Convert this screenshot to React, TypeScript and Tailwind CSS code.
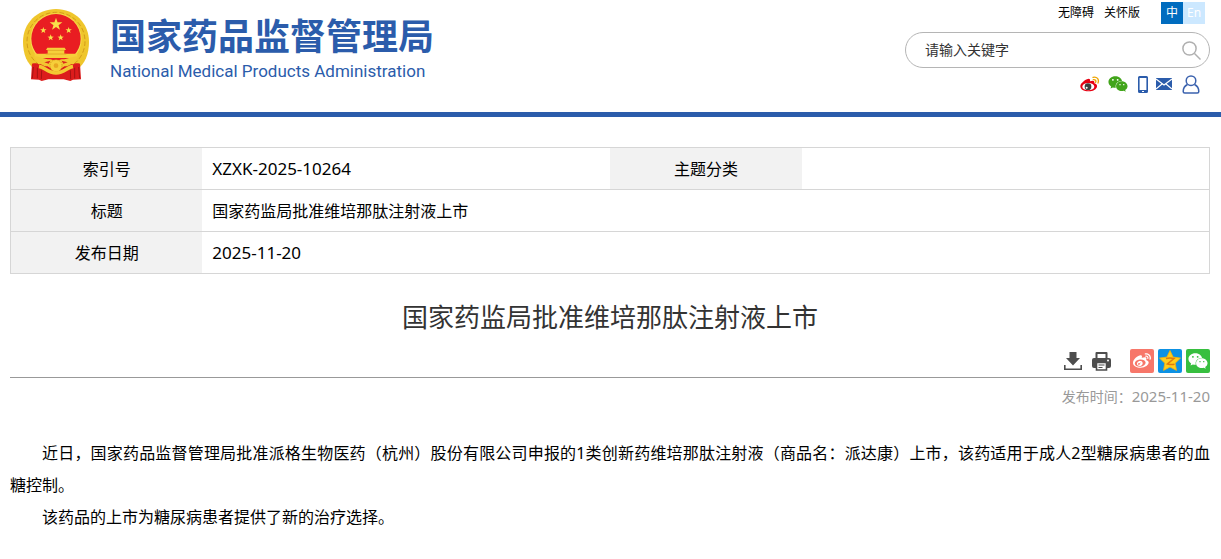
import { FaWeixin, FaWeibo } from "react-icons/fa";

const font = "font-['Noto_Sans','Noto_Sans_CJK_SC',sans-serif]";

function starPoints(cx: number, cy: number, r: number, inner = 0.4) {
  return Array.from({ length: 10 }, (_, i) => {
    const a = (Math.PI / 5) * i - Math.PI / 2;
    const d = i % 2 === 0 ? r : r * inner;
    return `${(cx + d * Math.cos(a)).toFixed(1)},${(cy + d * Math.sin(a)).toFixed(1)}`;
  }).join(" ");
}

function Emblem() {
  return (
    <svg viewBox="0 0 198 216" className="h-[72px] w-[66px] shrink-0" aria-hidden="true">
      <path d="M99 0c56 0 99 42 99 98 0 37-12 66-36 84l-63 14-63-14C12 164 0 135 0 98 0 42 43 0 99 0z" fill="#efc62c" />
      <circle cx="99" cy="97" r="87" fill="none" stroke="#d39a1a" strokeWidth="3" strokeDasharray="14 7" />
      <circle cx="99" cy="90" r="77" fill="#f7dc4c" />
      <circle cx="99" cy="89" r="74" fill="#e91d22" />
      <polygon points={starPoints(99, 46, 20)} fill="#f9e04b" />
      <polygon points={starPoints(61, 64, 10)} fill="#f9e04b" />
      <polygon points={starPoints(137, 64, 10)} fill="#f9e04b" />
      <polygon points={starPoints(83, 86, 10)} fill="#f9e04b" />
      <polygon points={starPoints(113, 86, 10)} fill="#f9e04b" />
      <path d="M73 116h52l4 7h-5v11h39v13H35v-13h39v-11h-5z" fill="#f6cf3a" />
      <path d="M74 124h50M68 135h62" stroke="#d9981f" strokeWidth="2" />
      <path d="M27 164c14-3 26 0 38 8h68c12-8 24-11 38-8l3 47-24 1-8 4-20-5H76l-20 5-8-4-24-1z" fill="#dc1c1c" />
      <path d="M31 174l-3 34M43 176l0 32M56 184l-1 26M167 174l3 34M155 176l0 32M142 184l1 26" stroke="#a51313" strokeWidth="3" />
      <path d="M34 142c22 2 34 10 48 9l17 5 17-5c14 1 26-7 48-9l-12 24c-14-2-22 0-34 10H80c-12-10-20-12-34-10z" fill="#f3c832" />
      <path d="M64 160l18-5-5 9zM134 160l-18-5 5 9z" fill="#d9281e" />
      <circle cx="99" cy="170" r="18" fill="#f6cf3a" stroke="#c98a14" strokeWidth="2" strokeDasharray="4 3" />
      <circle cx="99" cy="170" r="7" fill="#e8a822" />
      <path d="M48 172c18 3 26 20 51 20s33-17 51-20" fill="none" stroke="#f3c832" strokeWidth="11" />
    </svg>
  );
}

function WeiboColor() {
  return (
    <svg viewBox="0 0 60 48" className="h-4 w-5" aria-hidden="true">
      <path d="M21 10c7-4 11 0 9 6 8-3 15-2 13 6 6 2 9 5 8 10-2 8-12 14-25 14C11 46 1 40 1 31c0-7 10-17 20-21z" fill="#e60012" />
      <ellipse cx="25" cy="32" rx="18" ry="11" fill="#fff" />
      <circle cx="24" cy="32" r="10" fill="#3e3e3e" />
      <circle cx="20" cy="35" r="3" fill="#fff" />
      <path d="M39 4c12-3 19 6 15 17M40 11c6-1 9 3 7 8" fill="none" stroke="#efa500" strokeWidth="4" strokeLinecap="round" />
    </svg>
  );
}

function PhoneIcon() {
  return (
    <svg viewBox="0 0 10 17" className="h-[17px] w-[10px]" aria-hidden="true">
      <path fillRule="evenodd" d="M1.500 0h7A1.500 1.500 0 0 1 10 1.500v14A1.500 1.500 0 0 1 8.500 17h-7A1.500 1.500 0 0 1 0 15.500v-14A1.500 1.500 0 0 1 1.500 0zM1.600 2v12h6.800V2zM4 15v1h2v-1z" fill="#2b5cab" />
    </svg>
  );
}

function MailIcon() {
  return (
    <svg viewBox="0 0 16 12" className="h-3 w-4" aria-hidden="true">
      <path d="M0 0h16v12H0z" fill="#2b5cab" />
      <path d="M0 1l8 6 8-6M0 11l6-5M16 11l-6-5" fill="none" stroke="#fff" strokeWidth="1.2" />
    </svg>
  );
}

function UserIcon() {
  return (
    <svg viewBox="0 0 18 19" className="h-[19px] w-[18px]" fill="none" stroke="#3b62ae" strokeWidth="1.5" aria-hidden="true">
      <circle cx="9" cy="5.700" r="4.800" />
      <path d="M5.500 9.500C2.500 11 1.200 13.500 1.200 16.500c0 1 .5 1.500 1.500 1.500h12.600c1 0 1.500-.5 1.500-1.500 0-3-1.300-5.500-4.300-7" />
    </svg>
  );
}

function DownloadIcon() {
  return (
    <svg viewBox="0 0 18 18" className="h-[18px] w-[18px]" aria-hidden="true">
      <path d="M5.500 0h7v6H16l-7 7.500L2 6h3.500z" fill="#4d4d4d" />
      <path d="M.8 13v4.200h16.400V13" fill="none" stroke="#4d4d4d" strokeWidth="1.600" />
    </svg>
  );
}

function PrintIcon() {
  return (
    <svg viewBox="0 0 19 19" className="h-[19px] w-[19px]" aria-hidden="true">
      <path d="M4.500 6V1h10v5" fill="none" stroke="#4d4d4d" strokeWidth="2" strokeLinejoin="round" />
      <path d="M2 6h15a2 2 0 0 1 2 2v6a2 2 0 0 1-2 2H2a2 2 0 0 1-2-2V8a2 2 0 0 1 2-2z" fill="#4d4d4d" />
      <path d="M4.500 10.500h10V18h-10z" fill="#fff" stroke="#4d4d4d" strokeWidth="1.600" />
      <path d="M6.500 13h6M6.500 15.500h4" stroke="#4d4d4d" strokeWidth="1.200" />
      <circle cx="16" cy="8.500" r="1" fill="#fff" />
    </svg>
  );
}

function QzoneIcon() {
  return (
    <svg viewBox="0 0 24 24" className="h-6 w-6" aria-hidden="true">
      <polygon points={starPoints(12, 12.5, 11, 0.5)} fill="#ffce1c" stroke="#f0b010" strokeWidth="0.8" strokeLinejoin="round" />
      <path d="M8 9.500c3-.8 5-.8 8 0l-6.500 5.500c2.500.7 4.500.8 7 .2" fill="none" stroke="#e07a0c" strokeWidth="1.600" />
    </svg>
  );
}

export default function App() {
  return (
    <div className={`min-h-screen bg-white text-base text-black ${font}`}>
      <header className="flex h-[117px] items-start justify-between border-b-5 border-[#2b5cab] pr-[11px] pl-[23px]">
        <a href="#" className="flex gap-[21px] pt-[9px] text-[#2b5cab]">
          <Emblem />
          <span className="flex flex-col pt-2">
            <span className="text-4xl leading-10 font-bold">国家药品监督管理局</span>
            <span className="pt-1 font-['Roboto',sans-serif] text-[17px] leading-5">
              National Medical Products Administration
            </span>
          </span>
        </a>

        <div className="flex w-[305px] flex-col pt-0.5">
          <div className="flex items-center justify-end pr-[5px] text-xs">
            <a href="#">无障碍</a>
            <a href="#" className="ml-2.5">关怀版</a>
            <button className="ml-[21px] h-[22px] w-[22px] bg-[#006cbf] text-white">中</button>
            <button className="h-[22px] w-[22px] bg-[#cce8ff] text-white">En</button>
          </div>
          <form className="mt-2 flex h-9 items-center rounded-full border border-[#b5b5b5] pr-2 pl-[19px]">
            <input
              type="text"
              aria-label="请输入关键字"
              placeholder="请输入关键字"
              className="min-w-0 flex-1 text-sm outline-none placeholder:text-[#333]"
            />
            <button type="button" aria-label="搜索">
              <svg viewBox="0 0 19 19" className="h-[19px] w-[19px]" fill="none" stroke="#b0b0b0" strokeWidth="1.500">
                <circle cx="7.500" cy="7.500" r="6.600" />
                <path d="M12.500 12.500l6 6" />
              </svg>
            </button>
          </form>
          <div className="mt-1.5 flex h-5 items-center justify-end gap-2 pr-2.5">
            <a href="#" aria-label="微博"><WeiboColor /></a>
            <a href="#" aria-label="微信"><FaWeixin className="h-5 w-5 text-[#42a51b]" /></a>
            <a href="#" aria-label="手机版" className="ml-0.5"><PhoneIcon /></a>
            <a href="#" aria-label="邮箱"><MailIcon /></a>
            <a href="#" aria-label="个人中心" className="ml-0.5"><UserIcon /></a>
          </div>
        </div>
      </header>

      <main className="pt-[30px] pr-[11px] pl-[10px]">
        <table className="w-full table-fixed border-collapse border border-[#d6d6d6] leading-6">
          <colgroup>
            <col className="w-[16%]" />
            <col className="w-[34%]" />
            <col className="w-[16%]" />
            <col className="w-[34%]" />
          </colgroup>
          <tbody>
            <tr className="h-[42px] border-b border-[#d6d6d6]">
              <th className="bg-[#f2f2f2] font-normal">索引号</th>
              <td className="px-2.5 text-[17px]">XZXK-2025-10264</td>
              <th className="bg-[#f2f2f2] font-normal">主题分类</th>
              <td className="px-2.5"></td>
            </tr>
            <tr className="h-[42px] border-b border-[#d6d6d6]">
              <th className="bg-[#f2f2f2] font-normal">标题</th>
              <td colSpan={3} className="px-2.5">国家药监局批准维培那肽注射液上市</td>
            </tr>
            <tr className="h-[42px]">
              <th className="bg-[#f2f2f2] font-normal">发布日期</th>
              <td colSpan={3} className="px-2.5 text-[17px]">2025-11-20</td>
            </tr>
          </tbody>
        </table>

        <h1 className="mt-[23px] text-center text-[26px] leading-10 text-[#333]">
          国家药监局批准维培那肽注射液上市
        </h1>

        <div className="mt-3 flex h-[29px] items-start justify-end border-b border-[#999]">
          <button aria-label="下载" className="mt-[3px]"><DownloadIcon /></button>
          <button aria-label="打印" className="mt-[3px] ml-2.5"><PrintIcon /></button>
          <a href="#" aria-label="分享到微博" className="ml-[19px] flex h-6 w-6 items-center justify-center rounded-xs bg-[#f7776a] text-white">
            <FaWeibo className="h-[18px] w-[18px]" />
          </a>
          <a href="#" aria-label="分享到QQ空间" className="ml-1 h-6 w-6 rounded-xs bg-[#0d91e3]">
            <QzoneIcon />
          </a>
          <a href="#" aria-label="分享到微信" className="ml-1 flex h-6 w-6 items-center justify-center rounded-xs bg-[#37bf3f] text-white">
            <FaWeixin className="h-5 w-5" />
          </a>
        </div>
        <p className="mt-1.5 text-right text-sm leading-6 text-[#999]">
          发布时间：<time className="text-[15px]">2025-11-20</time>
        </p>

        <article className="mt-7 text-justify leading-8">
          <p className="indent-8">
            近日，国家药品监督管理局批准派格生物医药（杭州）股份有限公司申报的1类创新药维培那肽注射液（商品名：派达康）上市，该药适用于成人2型糖尿病患者的血糖控制。
          </p>
          <p className="indent-8">该药品的上市为糖尿病患者提供了新的治疗选择。</p>
        </article>
      </main>
    </div>
  );
}
